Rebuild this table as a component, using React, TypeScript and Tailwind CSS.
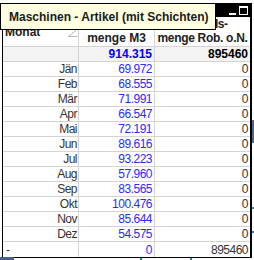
import React from "react";

const rows: [string, string][] = [
  ["Jän", "69.972"],
  ["Feb", "68.555"],
  ["Mär", "71.991"],
  ["Apr", "66.547"],
  ["Mai", "72.191"],
  ["Jun", "89.616"],
  ["Jul", "93.223"],
  ["Aug", "57.960"],
  ["Sep", "83.565"],
  ["Okt", "100.476"],
  ["Nov", "85.644"],
  ["Dez", "54.575"],
];

export default function App() {
  return (
    <div className="relative w-[254px] h-[260px] overflow-hidden bg-white font-['Liberation_Sans',Arial,sans-serif]">
      <div className="ml-[2px] mt-[3px] w-[250px] border-l border-r-2 border-b border-black bg-white">
        {/* title bar */}
        <div className="h-[14px] bg-black flex items-end justify-end gap-[3px] pr-[2px] pb-[1px]">
          <div className="w-[7px] h-[2px] bg-white mb-[1px]" />
          <div className="w-[9px] h-[9px] border border-t-2 border-white mb-[1px]" />
        </div>
        {/* header */}
        <div className="flex h-[30px] border-b border-[#d4d4d4] text-[12px] font-bold text-[#222] leading-[14px]">
          <div className="relative w-[76px] border-r border-[#d4d4d4] flex items-center pl-[2px]">
            <span>Monat</span>
            <svg className="absolute left-[65px] top-[12px]" width="10" height="8" viewBox="0 0 10 8">
              <polyline points="9,0.5 0.5,7.5 9.5,7.5" fill="none" stroke="#b5b5b5" strokeWidth="1" />
            </svg>
          </div>
          <div className="w-[76px] border-r border-[#d4d4d4] flex flex-col items-center justify-end pb-[1px] whitespace-nowrap">
            <span>menge M3</span>
          </div>
          <div className="flex-1 flex flex-col items-center justify-end pb-[1px] whitespace-nowrap">
            <span className="tracking-[-0.4px] pr-[4px]">Bestands-</span>
            <span className="tracking-[-0.3px]">menge Rob. o.N.</span>
          </div>
        </div>
        {/* totals */}
        <div className="flex h-[15px] border-b border-[#d4d4d4] bg-[#f3f3f3] text-[12px] font-bold leading-[14px]">
          <div className="w-[76px] border-r border-[#d4d4d4]" />
          <div className="w-[76px] border-r border-[#d4d4d4] flex items-center justify-end pr-[2px] text-[#0000ff]">914.315</div>
          <div className="flex-1 flex items-center justify-end pr-[2px] text-black">895460</div>
        </div>
        {/* rows */}
        {rows.map(([m, v]) => (
          <div key={m} className="flex h-[15px] border-b border-[#d4d4d4] text-[12px] tracking-[-0.5px] leading-[14px]">
            <div className="w-[76px] border-r border-[#d4d4d4] flex items-center justify-end pr-[1px] text-[#333]">{m}</div>
            <div className="w-[76px] border-r border-[#d4d4d4] flex items-center justify-end pr-[2px] text-[#2b2bff]">{v}</div>
            <div className="flex-1 flex items-center justify-end pr-[2px] text-[#333]">0</div>
          </div>
        ))}
        <div className="flex h-[15px] text-[12px] tracking-[-0.5px] leading-[14px]">
          <div className="w-[76px] border-r border-[#d4d4d4] flex items-center pl-[3px] text-[#333]">-</div>
          <div className="w-[76px] border-r border-[#d4d4d4] flex items-center justify-end pr-[2px] text-[#2b2bff]">0</div>
          <div className="flex-1 flex items-center justify-end pr-[2px] text-[#333]">895460</div>
        </div>
      </div>

      {/* background fragments */}
      <div className="absolute left-0 top-[257px] w-[14px] h-[3px] bg-[#4b5f8c]" />
      <div className="absolute left-[252px] top-[120px] w-[2px] h-[23px] bg-[#56647e]" />
      <div className="absolute left-[252px] top-[207px] w-[2px] h-[2px] bg-[#2a8a86]" />
      <div className="absolute left-[252px] top-[231px] w-[2px] h-[2px] bg-[#3a66c8]" />
      <div className="absolute left-[140px] top-[258px] w-[2px] h-[2px] bg-[#2a8a86]" />
      <div className="absolute left-[190px] top-[258px] w-[2px] h-[2px] bg-[#2a8a86]" />

      {/* tooltip */}
      <div className="absolute left-0 top-[3px] w-[216px] h-[27px] border border-black bg-[#ffffe1] flex items-center pl-[8px] text-[12px] font-bold text-[#1a1a1a] whitespace-nowrap">
        Maschinen - Artikel (mit Schichten)
      </div>
    </div>
  );
}
